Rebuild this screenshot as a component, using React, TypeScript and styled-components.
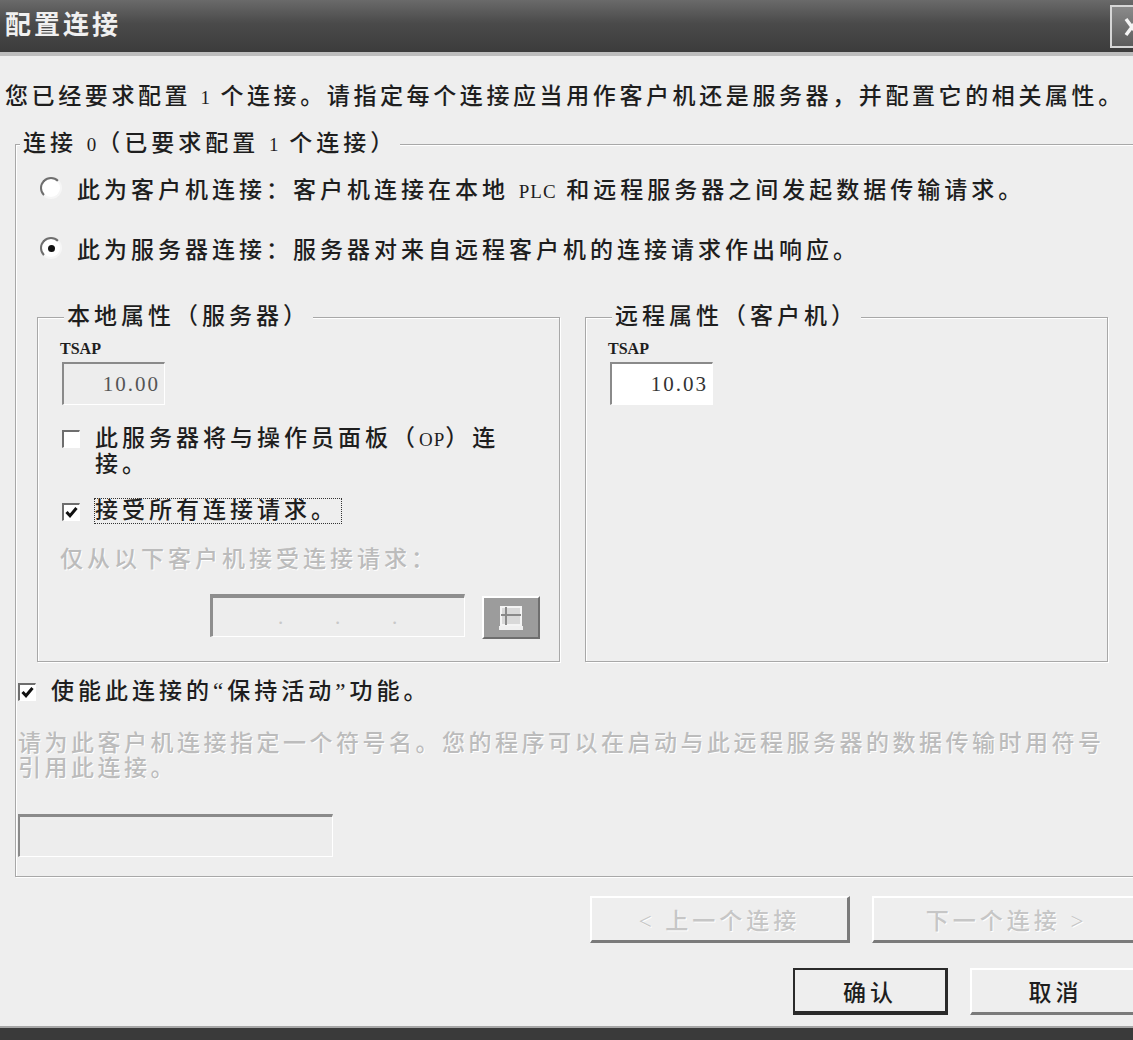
import React from "react";
import styled, { createGlobalStyle } from "styled-components";

const GlobalStyle = createGlobalStyle`
  html, body { margin: 0; padding: 0; background: #eeeeee; }
  body { font-family: "Liberation Serif", "Noto Sans CJK SC", serif; }
`;

const Window = styled.div`
  width: 1133px;
  height: 1040px;
  overflow: hidden;
  background: #eeeeee;
`;

const Page = styled.div`
  width: 1160px;
  height: 1040px;
  display: flex;
  flex-direction: column;
  font-family: "Liberation Serif", "Noto Sans CJK SC", serif;
  font-size: 23px;
  font-weight: 500;
  letter-spacing: 4px;
  color: #1e1e1e;
`;

const TitleBar = styled.div`
  flex: none;
  height: 52px;
  background: linear-gradient(#6a6a6a, #4a4a4a 45%, #3c3c3c);
  border-bottom: 4px solid #bdbdbd;
  display: flex;
  align-items: center;
  justify-content: space-between;
  padding-left: 5px;
`;

const Title = styled.span`
  color: #f0f0f0;
  font-weight: 700;
  font-size: 26px;
  letter-spacing: 3px;
  line-height: 30px;
`;

const CloseButton = styled.div`
  align-self: flex-start;
  margin-top: 5px;
  margin-right: 7px;
  width: 43px;
  height: 43px;
  box-sizing: border-box;
  border: 2px solid #d6d6d6;
  background: linear-gradient(#8a8a8a, #5c5c5c);
  display: grid;
  place-items: center;
`;

const Intro = styled.div`
  margin: 26px 0 0 5px;
  line-height: 30px;
  letter-spacing: 3.6px;
  white-space: nowrap;
`;

const Latin = styled.span`
  font-size: 19px;
  letter-spacing: 1px;
`;

const GroupBox = styled.fieldset<{ $w: number }>`
  margin: 0;
  padding: 0;
  min-width: 0;
  width: ${(p) => p.$w}px;
  box-sizing: border-box;
  border: 1px solid #a8a8a8;
  box-shadow: 1px 1px 0 #ffffff, inset 1px 1px 0 #ffffff;
`;

const OuterGroup = styled(GroupBox)`
  margin: 16px 0 0 15px;
  padding-bottom: 19px;
`;

const Legend = styled.legend`
  margin-left: 4px;
  padding: 0 3px;
  line-height: 30px;
  background: #eeeeee;
  white-space: nowrap;
`;

const RadioRow = styled.label<{ $top: number }>`
  display: flex;
  align-items: center;
  gap: 15px;
  height: 30px;
  margin: ${(p) => p.$top}px 0 0 24px;
  white-space: nowrap;
`;

const Radio = styled.span<{ $checked?: boolean }>`
  flex: none;
  width: 22px;
  height: 22px;
  box-sizing: border-box;
  border-radius: 50%;
  border: 2px solid;
  border-color: #6e6e6e #f6f6f6 #f6f6f6 #6e6e6e;
  background: #ffffff;
  display: grid;
  place-items: center;
  &::after {
    content: "";
    width: 7px;
    height: 7px;
    border-radius: 50%;
    background: ${(p) => (p.$checked ? "#111111" : "transparent")};
  }
`;

const Panels = styled.div`
  display: grid;
  grid-template-columns: 523px 523px;
  column-gap: 25px;
  margin: 39px 0 0 21px;
`;

const Panel = styled(GroupBox)`
  height: 360px;
  padding: 0 0 0 22px;
`;

const FieldLabel = styled.div`
  margin-top: 8px;
  font-family: "Liberation Serif", serif;
  font-weight: 700;
  font-size: 16px;
  letter-spacing: 0;
  line-height: 18px;
`;

const Field = styled.div<{ $w: number; $h: number; $disabled?: boolean }>`
  width: ${(p) => p.$w}px;
  height: ${(p) => p.$h}px;
  box-sizing: border-box;
  border-top: 2px solid #8a8a8a;
  border-left: 2px solid #8a8a8a;
  border-right: 1px solid #ffffff;
  border-bottom: 1px solid #ffffff;
  background: ${(p) => (p.$disabled ? "#ededed" : "#ffffff")};
  display: flex;
  align-items: center;
  justify-content: flex-end;
  padding-right: 4px;
  font-family: "Liberation Serif", serif;
  font-size: 21px;
  font-weight: 400;
  letter-spacing: 2px;
  color: ${(p) => (p.$disabled ? "#555555" : "#333333")};
`;

const TsapField = styled(Field)`
  margin: 4px 0 0 2px;
`;

const CheckRow = styled.label<{ $top: number; $left: number }>`
  display: flex;
  align-items: flex-start;
  gap: 15px;
  margin: ${(p) => p.$top}px 0 0 ${(p) => p.$left}px;
`;

const CheckBox = styled.span`
  flex: none;
  width: 18px;
  height: 18px;
  margin-top: 4px;
  box-sizing: border-box;
  border-top: 2px solid #6e6e6e;
  border-left: 2px solid #6e6e6e;
  border-right: 1px solid #ffffff;
  border-bottom: 1px solid #ffffff;
  background: #ffffff;
  display: grid;
  place-items: center;
`;

const CheckText = styled.span<{ $width?: number; $focus?: boolean }>`
  line-height: ${(p) => (p.$focus ? 24 : 25)}px;
  max-width: ${(p) => (p.$width ? `${p.$width}px` : "none")};
  white-space: ${(p) => (p.$width ? "normal" : "nowrap")};
  outline: ${(p) => (p.$focus ? "1px dotted #333333" : "none")};
  padding: ${(p) => (p.$focus ? "0 3px 0 0" : "0")};
`;

const DisabledText = styled.div<{ $top: number; $width?: number }>`
  margin-top: ${(p) => p.$top}px;
  color: #bcbcbc;
  text-shadow: 1px 1px 0 #ffffff;
  line-height: 25px;
  max-width: ${(p) => (p.$width ? `${p.$width}px` : "none")};
`;

const DisabledLabel = styled(DisabledText)`
  line-height: 30px;
  white-space: nowrap;
`;

const HintText = styled(DisabledText)`
  margin-left: 2px;
  letter-spacing: 3.5px;
`;

const IpRow = styled.div`
  display: flex;
  align-items: flex-start;
  gap: 17px;
  margin: 19px 0 0 150px;
`;

const IpField = styled(Field)`
  border-top-width: 4px;
  border-left-width: 3px;
  border-color: #8e8e8e #ffffff #ffffff #8e8e8e;
  justify-content: space-around;
  padding: 0 40px;
  color: #c8c8c8;
`;

const BrowseButton = styled.div`
  width: 58px;
  height: 43px;
  margin-top: 2px;
  box-sizing: border-box;
  border: 2px solid;
  border-color: #ffffff #6e6e6e #6e6e6e #ffffff;
  background: #9c9c9c;
  display: grid;
  place-items: center;
`;

const SymbolField = styled(Field)`
  margin: 33px 0 0 2px;
  border-top-width: 3px;
`;

const ButtonRow = styled.div<{ $top: number }>`
  display: flex;
  justify-content: flex-end;
  gap: 22px;
  margin-top: ${(p) => p.$top}px;
  padding-right: 18px;
`;

const PushButton = styled.button<{ $w: number; $default?: boolean }>`
  width: ${(p) => p.$w}px;
  height: 47px;
  box-sizing: border-box;
  margin: 0;
  padding: 0;
  background: #eeeeee;
  border: 2px solid;
  border-color: ${(p) =>
    p.$default ? "#2a2a2a" : "#ffffff #7a7a7a #7a7a7a #ffffff"};
  border-bottom-width: ${(p) => (p.$default ? 4 : 3)}px;
  border-right-width: 3px;
  font: inherit;
  letter-spacing: inherit;
  color: #1e1e1e;
  &:disabled {
    color: #c6c6c6;
    text-shadow: 1px 1px 0 #ffffff;
  }
`;

const BottomBar = styled.div`
  margin-top: auto;
  height: 12px;
  background: #3a3a3a;
  border-top: 2px solid #a6a6a6;
`;

const Tick = () => (
  <svg width="13" height="13" viewBox="0 0 13 13">
    <path d="M1.5 6 L5 9.8 L11.5 2" fill="none" stroke="#111" strokeWidth="3" />
  </svg>
);

const CloseGlyph = () => (
  <svg width="20" height="22" viewBox="0 0 20 22">
    <path d="M4 3 L16 19 M16 3 L4 19" stroke="#f4f4f4" strokeWidth="3.5" />
  </svg>
);

const BrowseGlyph = () => (
  <svg width="26" height="28" viewBox="0 0 26 28">
    <rect x="3" y="3" width="20" height="18" fill="#d9d9d9" stroke="#f4f4f4" strokeWidth="2" />
    <path d="M3 11 H23 M8 3 V21" stroke="#8a8a8a" strokeWidth="2" />
    <rect x="1" y="22" width="24" height="4" fill="#f0f0f0" />
  </svg>
);

export default function App() {
  return (
    <>
      <GlobalStyle />
      <Window>
        <Page>
          <TitleBar>
            <Title>配置连接</Title>
            <CloseButton>
              <CloseGlyph />
            </CloseButton>
          </TitleBar>

          <Intro>
            您已经要求配置 <Latin>1</Latin> 个连接。请指定每个连接应当用作客户机还是服务器，并配置它的相关属性。
          </Intro>

          <OuterGroup $w={1150}>
            <Legend>
              连接 <Latin>0</Latin>（已要求配置 <Latin>1</Latin> 个连接）
            </Legend>

            <RadioRow $top={13}>
              <Radio />
              <span>
                此为客户机连接：客户机连接在本地 <Latin>PLC</Latin> 和远程服务器之间发起数据传输请求。
              </span>
            </RadioRow>
            <RadioRow $top={30}>
              <Radio $checked />
              <span>此为服务器连接：服务器对来自远程客户机的连接请求作出响应。</span>
            </RadioRow>

            <Panels>
              <Panel $w={523}>
                <Legend>本地属性（服务器）</Legend>
                <FieldLabel>TSAP</FieldLabel>
                <TsapField $w={103} $h={43} $disabled>
                  10.00
                </TsapField>

                <CheckRow $top={21} $left={2}>
                  <CheckBox />
                  <CheckText $width={415}>
                    <span>此服务器将与操作员面板（</span>
                    <Latin>OP</Latin>
                    <span>）连</span>
                    <span>接。</span>
                  </CheckText>
                </CheckRow>

                <CheckRow $top={22} $left={2}>
                  <CheckBox>
                    <Tick />
                  </CheckBox>
                  <CheckText $focus>接受所有连接请求。</CheckText>
                </CheckRow>

                <DisabledLabel $top={22}>仅从以下客户机接受连接请求：</DisabledLabel>

                <IpRow>
                  <IpField $w={255} $h={43} $disabled>
                    <span>.</span>
                    <span>.</span>
                    <span>.</span>
                  </IpField>
                  <BrowseButton>
                    <BrowseGlyph />
                  </BrowseButton>
                </IpRow>
              </Panel>

              <Panel $w={523}>
                <Legend>远程属性（客户机）</Legend>
                <FieldLabel>TSAP</FieldLabel>
                <TsapField $w={103} $h={43}>
                  10.03
                </TsapField>
              </Panel>
            </Panels>

            <CheckRow $top={17} $left={2}>
              <CheckBox>
                <Tick />
              </CheckBox>
              <CheckText>使能此连接的“保持活动”功能。</CheckText>
            </CheckRow>

            <HintText $top={27} $width={1095}>
              请为此客户机连接指定一个符号名。您的程序可以在启动与此远程服务器的数据传输时用符号引用此连接。
            </HintText>

            <SymbolField $w={315} $h={43} $disabled />
          </OuterGroup>

          <ButtonRow $top={19}>
            <PushButton $w={260} disabled>
              &lt; 上一个连接
            </PushButton>
            <PushButton $w={270} disabled>
              下一个连接 &gt;
            </PushButton>
          </ButtonRow>

          <ButtonRow $top={25}>
            <PushButton $w={155} $default>
              确认
            </PushButton>
            <PushButton $w={172}>取消</PushButton>
          </ButtonRow>

          <BottomBar />
        </Page>
      </Window>
    </>
  );
}
